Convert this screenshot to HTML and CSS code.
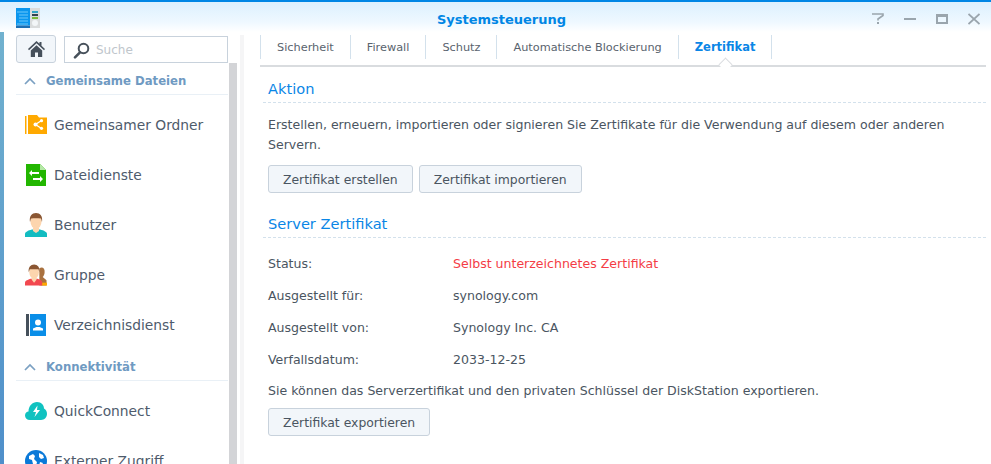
FILE: index.html
```html
<!DOCTYPE html>
<html lang="de">
<head>
<meta charset="utf-8">
<title>Systemsteuerung</title>
<link rel="stylesheet" href="styles.css">
</head>
<body>
<div class="window">
  <header class="titlebar">
    <svg class="app-icon" width="24" height="20" viewBox="0 0 24 20">
      <rect x="0" y="0" width="14" height="17.500" fill="#0a96ee"/>
      <rect x="0" y="17.500" width="14" height="2.500" fill="#1c6fb4"/>
      <path d="M1 4h11M3 7h9M3 10h9M3 13h9M1 16h11" stroke="#6cc8fa" stroke-width="1"/>
      <rect x="14" y="0" width="10" height="20" fill="#d9dcdd"/>
      <rect x="16" y="3" width="6" height="2" fill="#2fa3c4"/>
      <rect x="16" y="6" width="6" height="2" fill="#30424f"/>
      <rect x="16" y="9" width="6" height="2" fill="#7ab93b"/>
      <circle cx="19" cy="15" r="3" fill="#f2f6f8"/>
    </svg>
    <h1 class="title">Systemsteuerung</h1>
    <div class="win-buttons">
      <svg width="12" height="12" viewBox="0 0 12 12"><path d="M0 1h11v1.500L6 6v1.500" fill="none" stroke="#9aa5ad" stroke-width="1.600"/><rect x="5" y="9" width="2" height="2" fill="#9aa5ad"/></svg>
      <svg width="12" height="12" viewBox="0 0 12 12"><rect x="0" y="5" width="12" height="2" fill="#9aa5ad"/></svg>
      <svg width="12" height="12" viewBox="0 0 12 12"><path d="M0 1h12v10H0z M2 4v5h8V4z" fill="#9aa5ad" fill-rule="evenodd"/></svg>
      <svg width="12" height="12" viewBox="0 0 12 12"><path d="M.5 1l11 10M11.500 1l-11 10" stroke="#9aa5ad" stroke-width="1.700"/></svg>
    </div>
  </header>
  <div class="panes">
    <aside class="sidebar">
      <div class="side-top">
        <button class="home-btn" aria-label="Start">
          <svg width="17" height="16" viewBox="0 0 17 16"><path d="M8.500 0L0 8l1 1.200L8.500 2.300 16 9.200 17 8 13.500 4.700V1h-2v1.800z M2.800 9.500L8.500 4.200l5.700 5.300V16H10v-4.500H7V16H2.800z" fill="#46505b"/></svg>
        </button>
        <div class="search">
          <svg width="17" height="17" viewBox="0 0 17 17"><circle cx="10.500" cy="6.500" r="4.800" fill="none" stroke="#47515b" stroke-width="2"/><path d="M7 10.300L2 15.300" stroke="#47515b" stroke-width="2.600" stroke-linecap="round"/></svg>
          <span class="search-text">Suche</span>
        </div>
      </div>
      <div class="side-list">
        <div class="group-head">
          <svg width="12" height="8" viewBox="0 0 12 8"><path d="M1 7l5-5 5 5" fill="none" stroke="#7ba0c2" stroke-width="1.700"/></svg>
          <span>Gemeinsame Dateien</span>
        </div>
        <div class="item">
          <svg width="22" height="20" viewBox="0 0 22 20"><rect x="0" y="1" width="1.500" height="18" fill="#ffa900"/><path d="M3 19V0h9l2 2.500h8V19z" fill="#ffa900"/><path d="M16.500 5.500L10.500 9.500l6 4" fill="none" stroke="#fff" stroke-width="1.300"/><circle cx="10.500" cy="9.500" r="2" fill="#fff"/><circle cx="16.500" cy="5.700" r="1.600" fill="#fff"/><circle cx="16.500" cy="13.300" r="1.600" fill="#fff"/></svg>
          <span>Gemeinsamer Ordner</span>
        </div>
        <div class="item">
          <svg width="22" height="22" viewBox="0 0 22 22"><path d="M1 0h14l6 6v16H1z" fill="#22b600"/><path d="M15 0l6 6h-6z" fill="#b5e8a6"/><path d="M4 9l3-3v2h7v2H7v2zM18 15l-3 3v-2H8v-2h7v-2z" fill="#fff"/></svg>
          <span>Dateidienste</span>
        </div>
        <div class="item">
          <svg width="22" height="24" viewBox="0 0 22 24"><path d="M0 24v-3c0-2 3-3.500 7-4.500h8c4 1 7 2.500 7 4.500v3z" fill="#13bcc1"/><path d="M8 15h6v3l-3 2-3-2z" fill="#fcd5ae"/><ellipse cx="11" cy="8.500" rx="5.500" ry="7.500" fill="#fcd5ae"/><path d="M5 9C4 3 7 0 11 0s7 3 6 9l-1-3.500C13 5 8 5 6 5.500z" fill="#8a5632"/></svg>
          <span>Benutzer</span>
        </div>
        <div class="item">
          <svg width="23" height="22" viewBox="0 0 23 22"><path d="M15 4c3-2 6 0 5.500 4 0 2-1 4-2 5l4 3.500V22H15z" fill="#a9713f"/><path d="M17 19h6v3h-6z" fill="#ffa900"/><path d="M0 22v-3c0-2 3-3 6-4h7c3 1 5 2 5 4v3z" fill="#f2484f"/><path d="M7 13h5v3l-2.500 3L7 16z" fill="#fcd5ae"/><ellipse cx="9.500" cy="8" rx="5" ry="7" fill="#fcd5ae"/><path d="M4 8C3 3 6 0 9.500 0S16 3 15 8l-1-3c-3 0-6 0-9 0z" fill="#8a5632"/></svg>
          <span>Gruppe</span>
        </div>
        <div class="item">
          <svg width="20" height="22" viewBox="0 0 20 22"><rect x="0" y="0" width="3" height="22" fill="#46505b"/><rect x="4" y="0" width="16" height="22" fill="#0a8ee8"/><circle cx="12" cy="8.500" r="3" fill="#fff"/><path d="M7 16.500v-2l3.500-1.500h3l3.500 1.500v2z" fill="#fff"/></svg>
          <span>Verzeichnisdienst</span>
        </div>
        <div class="group-head group-gap">
          <svg width="12" height="8" viewBox="0 0 12 8"><path d="M1 7l5-5 5 5" fill="none" stroke="#7ba0c2" stroke-width="1.700"/></svg>
          <span>Konnektivität</span>
        </div>
        <div class="item">
          <svg width="22" height="18" viewBox="0 0 22 18"><path d="M5 18C2 18 0 16 0 13.500 0 11 2 9.500 3.500 9.500 3.500 4 7.500 0 12 0c4.500 0 7 3 7 6.500 2 1 3 3 3 5.500 0 3-2.500 6-6 6z" fill="#10c2c0"/><path d="M12.500 3.500L8 10h3l-1.500 5L15 8h-3z" fill="#fff"/></svg>
          <span>QuickConnect</span>
        </div>
        <div class="item">
          <svg width="22" height="22" viewBox="0 0 22 22"><circle cx="11" cy="11" r="11" fill="#0a79d8"/><path d="M4 6l4-2 2 2-1 3 3 3-1 4-3-2-1-4-3-1zM14 3l4 2 1 3-3 1-2-2zM15 12l3 1-2 4-2-1z" fill="#fff"/></svg>
          <span>Externer Zugriff</span>
        </div>
      </div>
      <div class="scroll-thumb"></div>
    </aside>
    <main class="content">
      <nav class="tabs">
        <a class="tab">Sicherheit</a>
        <a class="tab">Firewall</a>
        <a class="tab">Schutz</a>
        <a class="tab">Automatische Blockierung</a>
        <a class="tab tab-active">Zertifikat</a>
      </nav>
      <section class="pane-body">
        <h2 class="sec-title">Aktion</h2>
        <p class="para">Erstellen, erneuern, importieren oder signieren Sie Zertifikate für die Verwendung auf diesem oder anderen Servern.</p>
        <div class="btn-row">
          <button class="btn">Zertifikat erstellen</button>
          <button class="btn">Zertifikat importieren</button>
        </div>
        <h2 class="sec-title sec-second">Server Zertifikat</h2>
        <dl class="info">
          <div class="row"><dt>Status:</dt><dd class="red">Selbst unterzeichnetes Zertifikat</dd></div>
          <div class="row"><dt>Ausgestellt für:</dt><dd>synology.com</dd></div>
          <div class="row"><dt>Ausgestellt von:</dt><dd>Synology Inc. CA</dd></div>
          <div class="row"><dt>Verfallsdatum:</dt><dd>2033-12-25</dd></div>
        </dl>
        <p class="note">Sie können das Serverzertifikat und den privaten Schlüssel der DiskStation exportieren.</p>
        <button class="btn">Zertifikat exportieren</button>
      </section>
    </main>
  </div>
</div>
</body>
</html>
```
FILE: styles.css
```css
* { box-sizing: border-box; }
html, body { margin: 0; height: 100%; overflow: hidden; }
body {
  width: 991px; height: 464px;
  font-family: "DejaVu Sans", Verdana, sans-serif;
  font-size: 12.550px;
  color: #4a5561;
  background: linear-gradient(180deg, #74b4cf, #4f8fca);
}
.window {
  height: 464px;
  display: flex;
  flex-direction: column;
}
.titlebar {
  height: 32px;
  flex: none;
  display: grid;
  grid-template-columns: 1fr auto 1fr;
  align-items: center;
  background: linear-gradient(180deg, #dcf0fe, #eef8ff 65%, #fff);
  border-top: 2px solid #0086e5;
  padding: 0 11px 0 16px;
}
.app-icon { align-self: start; margin-top: 6px; }
.title {
  margin: 0 0 0 7px;
  font-size: 13px;
  font-weight: bold;
  color: #0086e5;
  position: relative;
  top: 2px;
}
.win-buttons {
  display: flex;
  justify-content: flex-end;
  gap: 20px;
  margin-top: 3px;
}
.panes { flex: 1; display: flex; min-height: 0; margin-left: 4px; background: #fff; }
.sidebar {
  width: 240px;
  flex: none;
  position: relative;
  padding-left: 12px;
  overflow: hidden;
  margin-top: 3px;
  border-right: 4px solid #f5f5f6;
}
.side-top { display: flex; gap: 8px; height: 28px; align-items: flex-start; }
.home-btn {
  width: 40px; height: 28px;
  padding: 0;
  border: 1px solid #c8d2dc;
  border-radius: 3px;
  background: #f2f6fa;
  display: flex; align-items: center; justify-content: center;
}
.search {
  width: 164px; height: 27px;
  margin-top: 1px;
  border: 1px solid #c8d2dc;
  display: flex; align-items: center;
  gap: 6px;
  padding: 1px 0 0 8px;
  background: #fff;
}
.search-text { font-size: 12px; color: #c0c6cc; }
.side-list { width: 212px; }
.group-head {
  height: 32px;
  margin-bottom: 5px;
  display: flex; align-items: center; gap: 10px;
  padding: 5px 0 0 8px;
  border-bottom: 1px solid #e9f0f6;
  font-size: 11.700px; font-weight: bold; color: #6f9ac2;
}
.group-gap { margin-top: -1px; }
.item {
  height: 50px;
  display: flex; align-items: center;
  gap: 7px;
  padding-left: 9px;
  font-size: 13.800px;
  color: #4e5b6c;
}
.item svg { width: 22px; flex: none; }
.scroll-thumb {
  position: absolute;
  left: 225px; top: 28px; bottom: 0;
  width: 8px;
  background: #d3d4d7;
}
.content { flex: 1; padding: 0 5px 0 16px; min-width: 0; }
.tabs {
  height: 35px;
  display: flex;
  padding-top: 3px;
  border-bottom: 2px solid #d9dcdf;
  align-items: flex-start;
  position: relative;
}
.tab {
  height: 24px;
  display: flex; align-items: center;
  padding: 0 16px;
  font-size: 11.300px;
  color: #59636e;
  border-left: 1px solid #d3e1ec;
}
.tab:last-child { border-right: 1px solid #d3e1ec; }
.tab-active { color: #0a86e6; font-weight: bold; font-size: 11.500px; position: relative; }
.tab-active::after {
  content: "";
  position: absolute;
  left: 50%; bottom: -11px;
  width: 10px; height: 10px;
  margin-left: -5px;
  background: #fff;
  border-left: 1px solid #d9dcdf;
  border-top: 1px solid #d9dcdf;
  transform: rotate(45deg) scale(0.9);
}
.pane-body { padding: 0 0 0 3px; }
.sec-title {
  margin: 0;
  font-size: 14.600px;
  font-weight: normal;
  color: #0a86e6;
  height: 36px;
  padding: 13px 0 0 5px;
  border-bottom: 1px dashed #d3e1ec;
  line-height: 18px;
}
.sec-second { margin-top: 10px; height: 35px; padding-top: 12px; }
.para { margin: 12px 0 0 5px; line-height: 20px; }
.btn-row { display: flex; gap: 6px; margin: 10px 0 0 5px; }
.btn {
  height: 28px;
  padding: 1px 14px 0;
  border: 1px solid #c8d2dc;
  border-radius: 3px;
  background: #f2f6fa;
  font-family: inherit;
  font-size: 12.400px;
  color: #4a5561;
}
.info { margin: 0 0 0 5px; padding-top: 9px; }
.row { display: flex; height: 32px; align-items: center; }
.row dt { width: 185px; }
.row dd { margin: 0; }
.red { color: #f43c45; }
.note { margin: 0 0 0 5px; padding-top: 6px; line-height: 20px; }
.note + .btn { margin: 7px 0 0 5px; }
```
